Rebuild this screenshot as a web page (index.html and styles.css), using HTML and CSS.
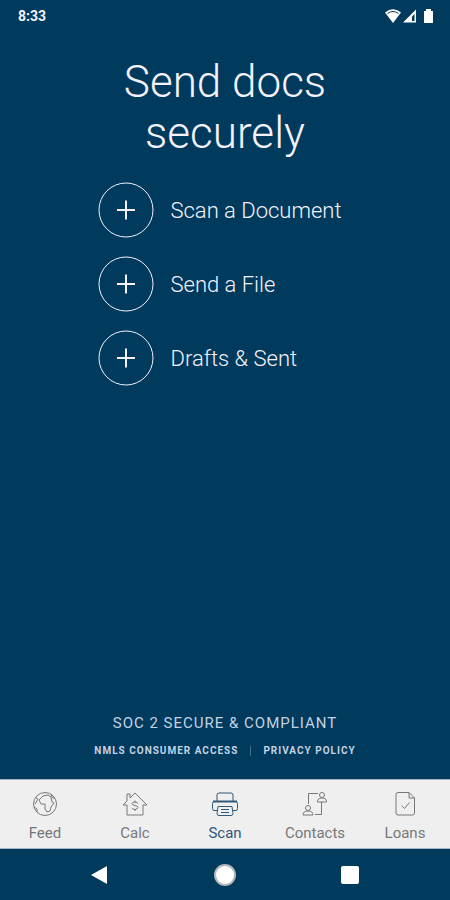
FILE: index.html
```html
<!DOCTYPE html>
<html lang="en">
  <head>
    <meta charset="UTF-8" />
    <meta name="viewport" content="width=device-width, initial-scale=1.0" />
    <link rel="stylesheet" href="styles.css">
    <title>Send docs securely</title>
  </head>
  <body>
    <header class="status">
      <span>8:33</span>
      <svg class="status-icons" width="50" height="16" viewBox="0 0 50 16" aria-hidden="true">
        <path d="M1 4.500Q9-2 17 4.500L9 15z" fill="#fff" />
        <path d="M3.500 5.500Q9 1.500 14.500 5.500" fill="none" stroke="#003a5d" />
        <path d="M19 14.500L32 1.500v13z" fill="#fff" />
        <path d="M28 8.500v4.500h2.500V6z" fill="#003a5d" />
        <path d="M40 3h2V1h5v2h2v12h-9z" fill="#fff" />
      </svg>
    </header>

    <main>
      <h1>Send docs securely</h1>
      <div class="actions">
        <button type="button" class="action">
          <svg class="plus" viewBox="0 0 56 56" aria-hidden="true">
            <circle cx="28" cy="28" r="27" />
            <path d="M19 28h18M28 18.500v19" />
          </svg>
          Scan a Document
        </button>
        <button type="button" class="action">
          <svg class="plus" viewBox="0 0 56 56" aria-hidden="true">
            <circle cx="28" cy="28" r="27" />
            <path d="M19 28h18M28 18.500v19" />
          </svg>
          Send a File
        </button>
        <button type="button" class="action">
          <svg class="plus" viewBox="0 0 56 56" aria-hidden="true">
            <circle cx="28" cy="28" r="27" />
            <path d="M19 28h18M28 18.500v19" />
          </svg>
          Drafts &amp; Sent
        </button>
      </div>
      <footer>
        <p class="secure">SOC 2 SECURE &amp; COMPLIANT</p>
        <div class="links">
          <a href="#">NMLS CONSUMER ACCESS</a>
          <span class="divider"></span>
          <a href="#">PRIVACY POLICY</a>
        </div>
      </footer>
    </main>

    <nav class="tabs">
      <a href="#" class="tab">
        <svg viewBox="0 0 28 28" aria-hidden="true">
          <circle cx="14" cy="14" r="11.500" />
          <path d="M12 6l5-1 3 2 1 5 2 1-3 4-1 4-3 1-2-3v-5h-4l-2-4zM5 8l2 1-3 5M3 17l3 2v3M20 4l1 3 3 2" />
        </svg>
        Feed
      </a>
      <a href="#" class="tab">
        <svg viewBox="0 0 28 28" aria-hidden="true">
          <path d="M6 15H2L6 11V4h3v4l5-5 12 12h-4v10H6z" />
          <path d="M17 13.500q-1-1.500-3-1.500-3 0-3 1.500t3 2q3 .5 3 2t-3 2q-2 0-3-1.500M14 10.500v2M14 19v2" />
        </svg>
        Calc
      </a>
      <a href="#" class="tab active">
        <svg viewBox="0 0 28 28" aria-hidden="true">
          <path d="M6 11V5q0-2 2-2h12q2 0 2 2v6" />
          <path d="M2 11.500h24" class="heavy" />
          <path d="M6 20.500H3q-1.500 0-1.500-2v-5q0-2 2-2h21q2 0 2 2v5q0 2-1.500 2h-3" />
          <path d="M7 16.500h14l1 7q0 2-2 2H8q-2 0-2-2zM10 19.500h8M10 22.500h8" />
        </svg>
        Scan
      </a>
      <a href="#" class="tab">
        <svg viewBox="0 0 28 28" aria-hidden="true">
          <circle cx="21" cy="5" r="2.500" />
          <circle cx="7" cy="18" r="2.500" />
          <path d="M16.500 12q0-4 4.500-4t4.500 4zM2 25q0-4 5-4t5 4zM17 3.500H7.500V14M20.500 12v12.500H14" />
        </svg>
        Contacts
      </a>
      <a href="#" class="tab">
        <svg viewBox="0 0 28 28" aria-hidden="true">
          <path d="M7 2.500h11l5.500 5.500v15q0 2-2 2H7q-2 0-2-2v-18.500q0-2 2-2zM18 2.500V8h5.500" />
          <path d="M10.500 15.500l3 3 5-6" />
        </svg>
        Loans
      </a>
    </nav>

    <div class="system">
      <button type="button" aria-label="Back">
        <svg viewBox="0 0 22 22"><path d="M2 11L18 2v18z" /></svg>
      </button>
      <button type="button" aria-label="Home">
        <svg viewBox="0 0 22 22">
          <circle cx="11" cy="11" r="11" fill="#b5b8bc" />
          <circle cx="11" cy="11" r="9" />
        </svg>
      </button>
      <button type="button" aria-label="Recent apps">
        <svg viewBox="0 0 22 22"><rect x="2" y="2" width="18" height="18" rx="2" /></svg>
      </button>
    </div>
  </body>
</html>
```

FILE: styles.css
```css
* {
  box-sizing: border-box;
  margin: 0;
  padding: 0;
  --blue: #003a5d;
  --gray: #77787a;
  --lightgray: #efefef;
}

body {
  display: flex;
  flex-direction: column;
  min-height: 100vh;
  font-family: Roboto, 'Liberation Sans', sans-serif;
  color: #f4f2fc;
  background-color: var(--blue);
}

button {
  border: none;
  color: inherit;
  background: none;
  font-family: inherit;
  cursor: pointer;
}

a {
  color: inherit;
  text-decoration: none;
}

.status {
  display: flex;
  justify-content: space-between;
  align-items: center;
  height: 32px;
  padding: 0 16px 0 18px;
  font-size: 14px;
  font-weight: 700;
}

main {
  display: flex;
  flex: 1;
  flex-direction: column;
  align-items: center;
}

h1 {
  max-width: 240px;
  margin: 25px 0 23px;
  font-size: 44px;
  font-weight: 300;
  line-height: 51px;
  text-align: center;
}

.actions {
  display: grid;
  gap: 18px;
  padding-right: 10px;
}

.action {
  display: flex;
  align-items: center;
  gap: 16px;
  font-size: 22px;
  font-weight: 300;
}

.plus {
  width: 56px;
  height: 56px;
  fill: none;
  stroke: currentColor;
}

.plus path {
  stroke-width: 2;
}

footer {
  margin-top: auto;
  padding-bottom: 20px;
  color: #c3d2e4;
  text-align: center;
}

.secure {
  margin-bottom: 10px;
  font-size: 15px;
  line-height: 20px;
  letter-spacing: 1px;
}

.links {
  display: flex;
  align-items: center;
  gap: 12px;
  font-size: 10px;
  font-weight: 700;
  line-height: 16px;
  letter-spacing: 1px;
}

.divider {
  width: 1px;
  height: 10px;
  background-color: #45698a;
}

.tabs {
  display: grid;
  grid-template-columns: repeat(5, 1fr);
  height: 70px;
  border: 1px solid #a9b4c4;
  border-width: 1px 0;
  background-color: var(--lightgray);
}

.tab {
  display: flex;
  flex-direction: column;
  align-items: center;
  gap: 5px;
  padding-top: 10px;
  color: var(--gray);
  font-size: 15px;
  line-height: 20px;
}

.tab svg {
  width: 28px;
  height: 28px;
  fill: none;
  stroke: currentColor;
}

.tab .heavy {
  stroke-width: 2;
}

.tab.active {
  color: #305878;
}

.system {
  display: flex;
  justify-content: center;
  align-items: center;
  gap: 103px;
  height: 51px;
}

.system svg {
  display: block;
  width: 22px;
  height: 22px;
  fill: white;
}
```
